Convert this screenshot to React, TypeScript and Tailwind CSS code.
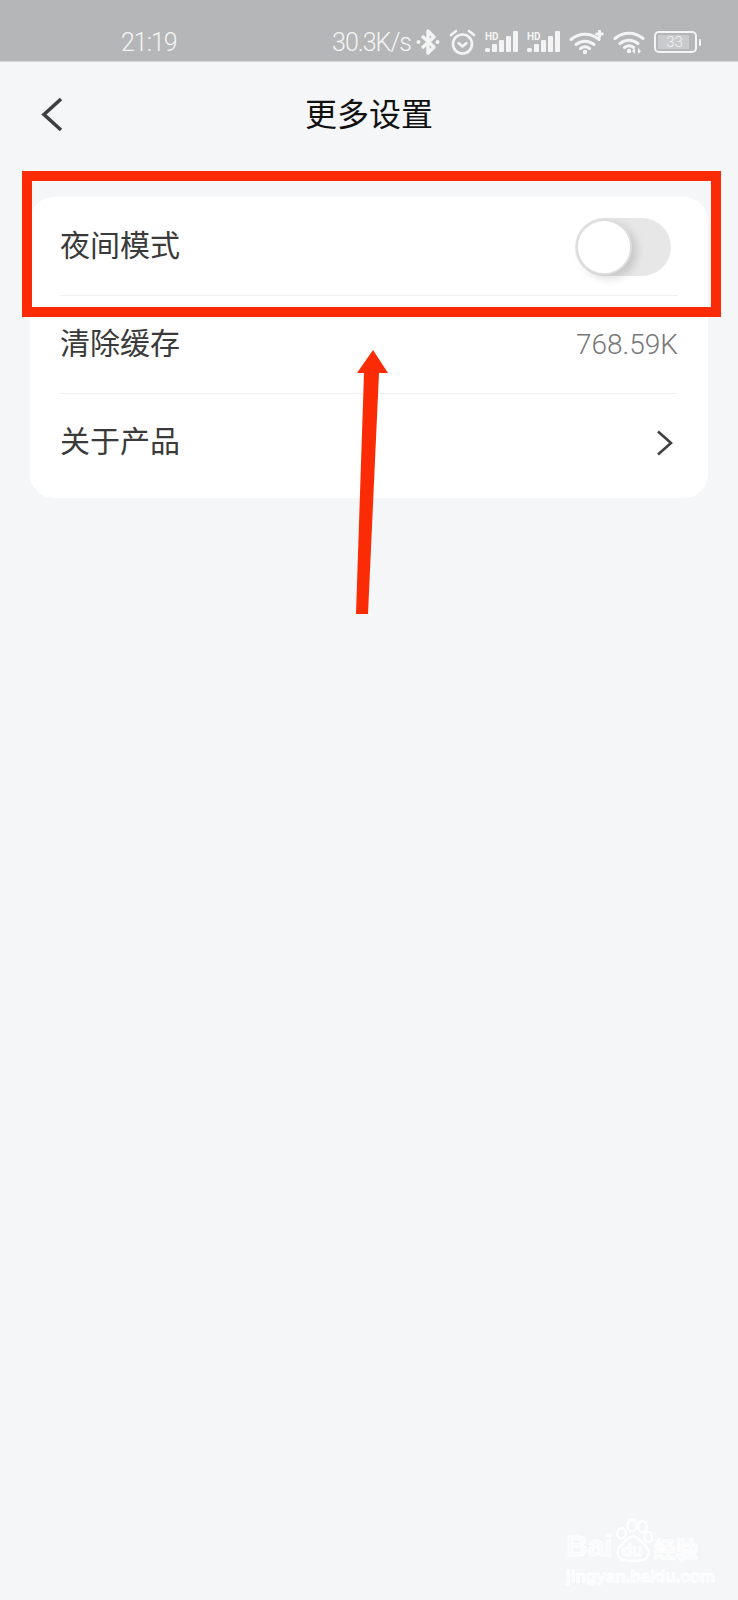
import React from 'react';

const cjk = '"Noto Sans CJK SC", sans-serif';

const Bluetooth = () => (
  <svg width="24" height="28" viewBox="0 0 24 28" fill="none" stroke="#f4f4f4" strokeWidth="3.400">
    <path d="M6 8l12 11-6 6V3l6 6L6 20" strokeLinejoin="round" />
    <circle cx="2.5" cy="14" r="2" fill="#f4f4f4" stroke="none" />
    <circle cx="21.5" cy="14" r="2" fill="#f4f4f4" stroke="none" />
  </svg>
);

const Alarm = () => (
  <svg width="27" height="26" viewBox="0 0 27 26" fill="none" stroke="#f4f4f4">
    <circle cx="13.5" cy="15" r="9.5" strokeWidth="2.6" />
    <path d="M2 6l5-4M25 6l-5-4" strokeWidth="2.6" strokeLinecap="round" />
    <path d="M9.5 14l4 3.5 4-3.5" strokeWidth="2.4" strokeLinecap="round" strokeLinejoin="round" />
  </svg>
);

const Signal = () => (
  <svg width="33" height="22" viewBox="0 0 33 22" fill="#f4f4f4">
    <rect x="0" y="17" width="5" height="4" rx="1.5" />
    <rect x="7" y="13" width="5" height="8" rx="1" />
    <rect x="14" y="9" width="5" height="12" rx="1" />
    <rect x="21" y="5" width="5" height="16" rx="1" />
    <rect x="28" y="0" width="5" height="21" rx="1" />
    <text x="0" y="9" fontSize="10" fontWeight="700" fontFamily="Roboto, sans-serif">HD</text>
  </svg>
);

const WifiArcs = () => (
  <g fill="none" stroke="#f4f4f4" strokeWidth="3" strokeLinecap="round">
    <path d="M2 9.5c8-7 20-7 28 0" />
    <path d="M7 14.5c5.500-4.500 12.500-4.500 18 0" />
    <path d="M11.500 18.500c2.700-2 6.300-2 9 0" />
    <circle cx="16" cy="22" r="2.200" fill="#f4f4f4" stroke="none" />
  </g>
);

const WifiPlus = () => (
  <svg width="35" height="25" viewBox="0 0 35 25">
    <WifiArcs />
    <path d="M30.500 0v8M26.500 4h8" stroke="#f4f4f4" strokeWidth="2.800" />
  </svg>
);

const WifiData = () => (
  <svg width="32" height="26" viewBox="0 0 32 26">
    <WifiArcs />
    <path d="M22 19l-3 3 3 3zM25 19l3 3-3 3z" fill="#f4f4f4" />
  </svg>
);

const Battery = () => (
  <div className="flex items-center gap-[2px]">
    <div className="flex h-[22px] w-[43px] items-center rounded-[5px] border-2 border-[#f4f4f4] p-[2px]">
      <div className="flex h-full w-[31px] items-center justify-center bg-[#c9cacc] pl-[2px] font-['Roboto',sans-serif] text-[15px] font-light leading-none text-[#f4f4f4]">33</div>
    </div>
    <div className="h-[7px] w-[2px] rounded-full bg-[#f4f4f4]" />
  </div>
);

const StatusBar = () => (
  <div className="flex h-[62px] items-end border-b border-[#d4d5d7] bg-[#b5b6b8] pb-[3px] font-['Roboto',sans-serif] font-light text-[#f4f4f4]">
    <span className="ml-[121px] text-[25px] leading-[30px] tracking-[-1px]">21:19</span>
    <div className="ml-auto mr-[37px] flex items-center">
      <span className="text-[25px] leading-[30px] tracking-[-1px]">30.3K/s</span>
      <div className="ml-[5px] flex -translate-y-[1px] items-center gap-[9px]">
        <Bluetooth />
        <Alarm />
        <Signal />
        <Signal />
        <WifiPlus />
        <WifiData />
        <Battery />
      </div>
    </div>
  </div>
);

const Row = ({ label, children, last }: { label: string; children: React.ReactNode; last?: boolean }) => (
  <div className={`flex h-[98px] items-center justify-between ${last ? '' : 'border-b border-[#efefef]'}`}>
    <span className="pb-[8px] text-[30px] leading-none text-[#3a3a3a]" style={{ fontFamily: cjk }}>{label}</span>
    {children}
  </div>
);

const Toggle = () => (
  <div className="mr-[7px] h-[58px] w-[96px] rounded-full bg-[#e7e7e7]">
    <div className="ml-[1px] mt-[1px] h-[56px] w-[56px] rounded-full border-2 border-[#dddddd] bg-white shadow-[5px_4px_8px_rgba(0,0,0,0.14)]" />
  </div>
);

const Watermark = () => (
  <div className="absolute left-[566px] top-[1518px] w-[140px] text-white/50 [-webkit-text-stroke:1px_#ffffff]">
    <div className="flex h-[46px] items-end">
      <span className="font-['Liberation_Sans',sans-serif] text-[30px] font-bold leading-[36px]">Bai</span>
      <div className="relative h-[46px] w-[40px]">
        <svg width="40" height="46" viewBox="0 0 42 46" fill="none" stroke="#ffffff" strokeWidth="2.400" className="absolute left-0 top-0">
          <ellipse cx="20" cy="7" rx="5" ry="6" />
          <ellipse cx="31" cy="8" rx="4.500" ry="6" />
          <ellipse cx="9" cy="15" rx="4.500" ry="5.500" />
          <ellipse cx="37" cy="19" rx="4" ry="5.500" />
          <path d="M21 18c5 0 9 6 14 11 4 5 3 13-5 14-5 1-13 1-18 0-8-1-9-9-5-14 5-5 9-11 14-11z" />
        </svg>
        <span className="absolute left-[9px] top-[24px] font-['Liberation_Sans',sans-serif] text-[17px] font-bold leading-[18px]">du</span>
      </div>
      <span className="ml-[1px] text-[22px] font-bold leading-[34px]" style={{ fontFamily: cjk }}>经验</span>
    </div>
    <div className="mt-[3px] font-['Liberation_Sans',sans-serif] text-[17px] font-bold leading-[20px]">jingyan.baidu.com</div>
  </div>
);

export default function App() {
  return (
    <div className="relative h-[1600px] w-[738px] overflow-hidden bg-[#f5f6f8]">
      <StatusBar />

      <div className="grid h-[105px] grid-cols-[1fr_auto_1fr] items-center">
        <svg width="22" height="35" viewBox="0 0 22 35" fill="none" stroke="#404040" strokeWidth="3.600" className="ml-[41px]">
          <path d="M20 2L3 17.500 20 33" />
        </svg>
        <h1 className="pb-[6px] text-[32px] font-normal leading-none text-[#111111]" style={{ fontFamily: cjk }}>更多设置</h1>
      </div>

      <div className="ml-[30px] mr-[30px] mt-[30px] rounded-[24px] bg-white px-[30px] pb-[6px] pt-[1px]">
        <Row label="夜间模式"><Toggle /></Row>
        <Row label="清除缓存">
          <span className="font-['Roboto',sans-serif] text-[28px] font-light leading-none text-[#777777]">768.59K</span>
        </Row>
        <Row label="关于产品" last>
          <svg width="17" height="26" viewBox="0 0 17 26" fill="none" stroke="#404040" strokeWidth="2.600" className="mr-[5px]">
            <path d="M2 1.500L15 13 2 24.500" />
          </svg>
        </Row>
      </div>

      {/* red annotation over the screenshot */}
      <div className="absolute left-[22px] top-[171px] h-[146px] w-[699px] border-[10px] border-[#fb2c05]" />
      <svg width="40" height="270" viewBox="0 0 40 270" className="absolute left-[352px] top-[348px]">
        <path d="M21 2L36 25H27L16 266H4L12 25H5z" fill="#fb2c05" />
      </svg>

      <Watermark />
    </div>
  );
}
